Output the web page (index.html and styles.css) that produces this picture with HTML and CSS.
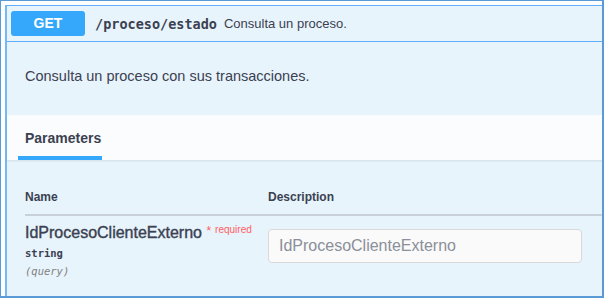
FILE: index.html
```html
<!DOCTYPE html>
<html>

<head>
  <meta charset="UTF-8">
  <title>proceso/estado</title>
  <link rel="stylesheet" href="styles.css">
</head>

<body>
  <div class="frame">
    <div class="opblock">
      <div class="summary">
        <span class="method">GET</span>
        <span class="path">/proceso/estado</span>
        <span class="summary-text">Consulta un proceso.</span>
      </div>

      <div class="description">Consulta un proceso con sus transacciones.</div>

      <div class="section-header">
        <div class="tab">Parameters</div>
      </div>

      <div class="params">
        <div class="params-head">
          <div class="col-name">Name</div>
          <div class="col-desc">Description</div>
        </div>
        <div class="params-row">
          <div class="col-name">
            <div class="param-name">IdProcesoClienteExterno <span class="star">*</span><span class="required">required</span></div>
            <div class="param-type">string</div>
            <div class="param-in">(query)</div>
          </div>
          <div class="col-desc">
            <input type="text" class="param-input" placeholder="IdProcesoClienteExterno">
          </div>
        </div>
      </div>
    </div>
  </div>
</body>

</html>
```

FILE: styles.css
```css
body {
  margin: 0;
  font-family: "Liberation Sans", Arial, sans-serif;
  color: #3b4151;
}

.frame {
  width: 604px;
  height: 298px;
  box-sizing: border-box;
  border: 1px solid #5b9bd5;
  border-right-width: 2px;
  border-bottom-width: 2px;
  padding: 4px 0 0 4px;
  overflow: hidden;
  background: #ffffff;
}

.opblock {
  width: 640px;
  height: 320px;
  border-top: 1px solid #61affe;
  border-left: 2px solid #74b9f3;
  background: #e8f4fc;
}

.summary {
  display: flex;
  align-items: center;
  height: 35px;
  padding-left: 4px;
  border-bottom: 1px solid #61affe;
}

.method {
  width: 74px;
  height: 25px;
  line-height: 25px;
  border-radius: 3px;
  background: #35a8fb;
  color: #ffffff;
  font-weight: 700;
  font-size: 14px;
  text-align: center;
}

.path {
  margin-left: 10px;
  font-family: "DejaVu Sans Mono", monospace;
  font-weight: 700;
  font-size: 13.5px;
  color: #3b4151;
}

.summary-text {
  margin-left: 7px;
  font-size: 13px;
}

.description {
  padding: 26px 18px 30px;
  font-size: 14.5px;
  line-height: 17px;
}

.section-header {
  padding-left: 11px;
  background: #fafcfe;
  box-shadow: 0 1px 2px rgba(0, 0, 0, 0.1);
  height: 45px;
  display: flex;
  align-items: flex-end;
}

.tab {
  width: 77px;
  padding: 0 0 9px 7px;
  font-size: 14px;
  font-weight: 700;
  line-height: 17px;
  border-bottom: 4px solid #35a8fb;
}

.params {
  padding: 30px 0 0 18px;
}

.params-head,
.params-row {
  display: grid;
  grid-template-columns: 243px 1fr;
}

.params-head {
  font-size: 12px;
  font-weight: 700;
  line-height: 15px;
  padding-bottom: 9px;
  border-bottom: 2px solid #c8d1da;
}

.param-name {
  margin-top: 5px;
  font-size: 16px;
  font-weight: 400;
  -webkit-text-stroke: 0.4px #3b4151;
  line-height: 18px;
}

.star {
  color: #ff6060;
  -webkit-text-stroke: 0;
  font-size: 12px;
  vertical-align: 3px;
  margin-left: 0;
}

.required {
  color: #ff6060;
  -webkit-text-stroke: 0;
  font-size: 10px;
  font-weight: 400;
  vertical-align: 5px;
  margin-left: 4px;
}

.param-type {
  margin-top: 3px;
  font-family: "DejaVu Sans Mono", monospace;
  font-size: 10.5px;
  font-weight: 700;
  line-height: 16px;
}

.param-in {
  margin-top: 2px;
  font-family: "DejaVu Sans Mono", monospace;
  font-size: 10.5px;
  font-style: italic;
  color: #808080;
  line-height: 16px;
}

.param-input {
  display: block;
  margin-top: 13px;
  width: 314px;
  height: 34px;
  box-sizing: border-box;
  padding: 0 10px;
  border: 1px solid #d9d9d9;
  border-radius: 4px;
  background: #fafafa;
  font-family: "Liberation Sans", Arial, sans-serif;
  font-size: 16px;
}

.param-input::placeholder {
  color: #8a8f99;
}
```
